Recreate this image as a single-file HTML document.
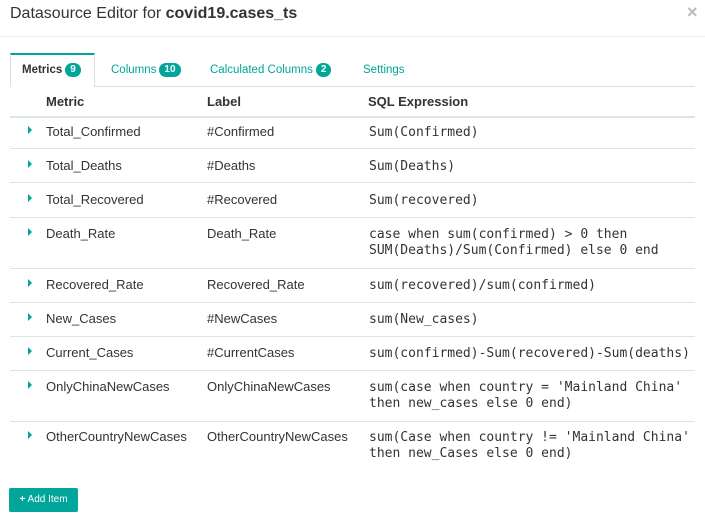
<!DOCTYPE html>
<html><head><style>
body{margin:0;width:705px;height:518px;background:#fff;font-family:"Liberation Sans",sans-serif;color:#333;position:relative;overflow:hidden}
.a{position:absolute;white-space:nowrap}
.title{left:10px;top:5px;font-size:16px;color:#333}
.hr{position:absolute;left:0;width:705px;height:1px;background:#eee}
.tab{position:absolute;top:54px;height:33px;font-size:11.5px;line-height:33px;color:#20a7c9}
.badge{display:inline-block;background:#00a699;color:#fff;border-radius:8px;font-size:10px;font-weight:bold;line-height:14px;padding:0 5px;margin-left:3px;vertical-align:1px}
.sep{position:absolute;left:10px;width:685px;height:1px;background:#dde3e6}
.c{position:absolute;font-size:13px;white-space:nowrap}
.m{font-family:"DejaVu Sans Mono","Liberation Mono",monospace;font-size:13px;line-height:16px;color:#333;margin-top:2px}
.tri{position:absolute;left:28px;width:0;height:0;border-top:4px solid transparent;border-bottom:4px solid transparent;border-left:4px solid #00a699}
</style></head><body>
<div class="a title">Datasource Editor for <b>covid19.cases_ts</b></div>
<div class="a" style="left:687px;top:2px;font-size:18px;color:#bbb;font-weight:bold">×</div>
<div class="hr" style="top:36px"></div>
<div style="position:absolute;left:10px;top:53px;width:85px;height:34px;border:1px solid #ddd;border-top:2px solid #00a699;border-bottom:none;background:#fff;box-sizing:border-box"></div>
<div style="position:absolute;left:95px;top:86px;width:600px;height:1px;background:#ddd"></div>
<div class="tab" style="left:22px;color:#333;font-weight:bold">Metrics<span class="badge">9</span></div>
<div class="tab" style="left:111px;color:#00a699">Columns<span class="badge">10</span></div>
<div class="tab" style="left:210px;color:#00a699">Calculated Columns<span class="badge">2</span></div>
<div class="tab" style="left:363px;color:#00a699">Settings</div>
<div class="c" style="left:46px;top:94px;font-weight:bold">Metric</div>
<div class="c" style="left:207px;top:94px;font-weight:bold">Label</div>
<div class="c" style="left:368px;top:94px;font-weight:bold">SQL Expression</div>
<div class="sep" style="top:116px;height:2px"></div>

<div class="tri" style="top:126px"></div><div class="c" style="left:46px;top:124px">Total_Confirmed</div><div class="c" style="left:207px;top:124px">#Confirmed</div><div class="c m" style="left:369px;top:123px">Sum(Confirmed)</div>
<div class="sep" style="top:148px"></div>
<div class="tri" style="top:160px"></div><div class="c" style="left:46px;top:158px">Total_Deaths</div><div class="c" style="left:207px;top:158px">#Deaths</div><div class="c m" style="left:369px;top:157px">Sum(Deaths)</div>
<div class="sep" style="top:182px"></div>
<div class="tri" style="top:194px"></div><div class="c" style="left:46px;top:192px">Total_Recovered</div><div class="c" style="left:207px;top:192px">#Recovered</div><div class="c m" style="left:369px;top:191px">Sum(recovered)</div>
<div class="sep" style="top:217px"></div>
<div class="tri" style="top:228px"></div><div class="c" style="left:46px;top:226px">Death_Rate</div><div class="c" style="left:207px;top:226px">Death_Rate</div><div class="c m" style="left:369px;top:225px">case when sum(confirmed) &gt; 0 then<br>SUM(Deaths)/Sum(Confirmed) else 0 end</div>
<div class="sep" style="top:268px"></div>
<div class="tri" style="top:279px"></div><div class="c" style="left:46px;top:277px">Recovered_Rate</div><div class="c" style="left:207px;top:277px">Recovered_Rate</div><div class="c m" style="left:369px;top:276px">sum(recovered)/sum(confirmed)</div>
<div class="sep" style="top:302px"></div>
<div class="tri" style="top:313px"></div><div class="c" style="left:46px;top:311px">New_Cases</div><div class="c" style="left:207px;top:311px">#NewCases</div><div class="c m" style="left:369px;top:310px">sum(New_cases)</div>
<div class="sep" style="top:336px"></div>
<div class="tri" style="top:347px"></div><div class="c" style="left:46px;top:345px">Current_Cases</div><div class="c" style="left:207px;top:345px">#CurrentCases</div><div class="c m" style="left:369px;top:344px">sum(confirmed)-Sum(recovered)-Sum(deaths)</div>
<div class="sep" style="top:370px"></div>
<div class="tri" style="top:381px"></div><div class="c" style="left:46px;top:379px">OnlyChinaNewCases</div><div class="c" style="left:207px;top:379px">OnlyChinaNewCases</div><div class="c m" style="left:369px;top:378px">sum(case when country = 'Mainland China'<br>then new_cases else 0 end)</div>
<div class="sep" style="top:421px"></div>
<div class="tri" style="top:431px"></div><div class="c" style="left:46px;top:429px">OtherCountryNewCases</div><div class="c" style="left:207px;top:429px">OtherCountryNewCases</div><div class="c m" style="left:369px;top:428px">sum(Case when country != 'Mainland China'<br>then new_Cases else 0 end)</div>

<div style="position:absolute;left:9px;top:488px;width:69px;height:24px;background:#00a699;border-radius:2px;color:#fff;font-size:10px;line-height:24px;text-align:center"><b>+</b> Add Item</div>
</body></html>
